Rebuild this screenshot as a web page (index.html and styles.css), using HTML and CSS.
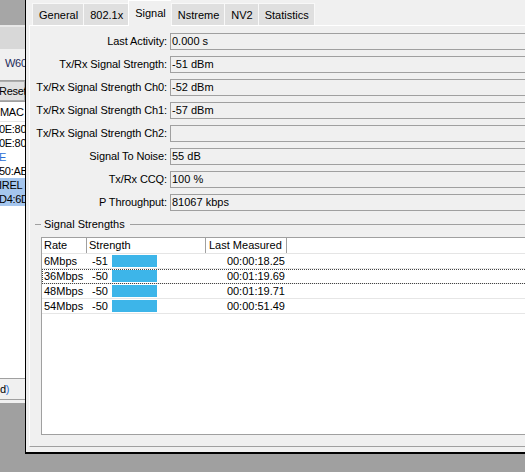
FILE: index.html
```html
<!DOCTYPE html>
<html lang="en">
<head>
    <meta charset="UTF-8">
    <meta name="viewport" content="width=device-width, initial-scale=1.0">
    <title>Registration - Signal</title>
    <link rel="stylesheet" href="styles.css">
</head>
<body>
    <div class="desktop">
        <!-- registration table window, mostly hidden behind the dialog -->
        <div class="bg-window">
            <div class="bg-title"></div>
            <div class="bg-toolbar"></div>
            <div class="bg-tabs">W60</div>
            <div class="bg-buttons"><span class="bg-button">Reset</span></div>
            <div class="bg-list">
                <div class="bg-list-head">MAC A</div>
                <div class="bg-row">0E:80</div>
                <div class="bg-row">0E:80</div>
                <div class="bg-row bg-link">E</div>
                <div class="bg-row">50:AB</div>
                <div class="bg-row selected">IREL</div>
                <div class="bg-row selected">D4:6D</div>
            </div>
            <div class="bg-status">d<span class="bg-link">)</span></div>
        </div>

        <div class="dialog">
            <div class="tabs">
                <span class="tab">General</span>
                <span class="tab">802.1x</span>
                <span class="tab active">Signal</span>
                <span class="tab">Nstreme</span>
                <span class="tab">NV2</span>
                <span class="tab">Statistics</span>
            </div>

            <div class="tab-page">
                <div class="fields">
                    <label>Last Activity:</label>
                    <div class="value">0.000 s</div>
                    <label>Tx/Rx Signal Strength:</label>
                    <div class="value">-51 dBm</div>
                    <label>Tx/Rx Signal Strength Ch0:</label>
                    <div class="value">-52 dBm</div>
                    <label>Tx/Rx Signal Strength Ch1:</label>
                    <div class="value">-57 dBm</div>
                    <label>Tx/Rx Signal Strength Ch2:</label>
                    <div class="value"></div>
                    <label>Signal To Noise:</label>
                    <div class="value">55 dB</div>
                    <label>Tx/Rx CCQ:</label>
                    <div class="value">100 %</div>
                    <label>P Throughput:</label>
                    <div class="value">81067 kbps</div>
                </div>

                <div class="group-title">Signal Strengths</div>

                <div class="list">
                    <div class="list-head">
                        <span>Rate</span>
                        <span>Strength</span>
                        <span>Last Measured</span>
                        <span class="filler"></span>
                    </div>
                    <div class="list-row">
                        <span>6Mbps</span>
                        <span class="strength"><span class="num">-51</span><span class="bar"></span></span>
                        <span class="time">00:00:18.25</span>
                        <span></span>
                    </div>
                    <div class="list-row focused">
                        <span>36Mbps</span>
                        <span class="strength"><span class="num">-50</span><span class="bar"></span></span>
                        <span class="time">00:01:19.69</span>
                        <span></span>
                    </div>
                    <div class="list-row">
                        <span>48Mbps</span>
                        <span class="strength"><span class="num">-50</span><span class="bar"></span></span>
                        <span class="time">00:01:19.71</span>
                        <span></span>
                    </div>
                    <div class="list-row">
                        <span>54Mbps</span>
                        <span class="strength"><span class="num">-50</span><span class="bar"></span></span>
                        <span class="time">00:00:51.49</span>
                        <span></span>
                    </div>
                </div>
            </div>
        </div>
    </div>
</body>
</html>
```

FILE: styles.css
```css
body {
    font-family: "Liberation Sans", Arial, sans-serif;
    font-size: 11px;
    color: #000;
    background-color: #a0a0a0;
    margin: 0;
    padding: 0;
    overflow: hidden;
}
.desktop {
    position: relative;
    height: 472px;
    overflow: hidden;
}

/* ---------- window behind ---------- */
.bg-window {
    position: absolute;
    left: 0;
    top: 0;
    width: 25px;
    height: 403px;
    overflow: hidden;
    white-space: nowrap;
    background-color: #f0f0f0;
    display: flex;
    flex-direction: column;
    padding-bottom: 3px;
    box-sizing: border-box;
    letter-spacing: -0.3px;
}
.bg-title {
    height: 25px;
    background-color: #a6a6a6;
}
.bg-toolbar {
    height: 22px;
    border-top: 2px solid #e8e8e8;
    background-color: #d8d8d8;
}
.bg-tabs {
    height: 31px;
    line-height: 28px;
    padding-left: 5px;
    color: #1c2a5a;
    border-bottom: 1px solid #a0a0a0;
}
.bg-buttons {
    height: 20px;
}
.bg-button {
    display: block;
    margin-left: -5px;
    padding: 0 4px 0 3px;
    line-height: 18px;
    background-color: #e1e1e1;
    border: 1px solid #adadad;
}
.bg-list {
    flex: 1;
    background-color: #fff;
    border-top: 1px solid #a0a0a0;
}
.bg-list-head {
    height: 19px;
    line-height: 21px;
    border-bottom: 1px solid #e5e5e5;
}
.bg-row {
    height: 14px;
    line-height: 14px;
    margin-left: -1px;
}
.bg-row.selected {
    background-color: #a5c6ee;
}
.bg-link {
    color: #2a6fd6;
}
.bg-status {
    height: 20px;
    line-height: 20px;
    border-top: 1px solid #a0a0a0;
    border-bottom: 1px solid #a0a0a0;
}

/* ---------- dialog ---------- */
.dialog {
    position: absolute;
    left: 25px;
    top: 0;
    width: 540px;
    height: 454px;
    box-sizing: border-box;
    background-color: #f0f0f0;
    border-left: 1px solid #000;
    border-bottom: 2px solid #000;
    padding: 0 0 5px 3px;
    display: flex;
    flex-direction: column;
}
.tabs {
    display: flex;
    align-items: flex-end;
    height: 25px;
    padding-left: 3px;
    white-space: nowrap;
}
.tab {
    height: 22px;
    line-height: 22px;
    padding: 0 5px 0 6px;
    box-sizing: border-box;
    background-color: #dfdfdf;
    border-top: 1px solid #f8f8f8;
    border-left: 1px solid #f8f8f8;
}
.tab:last-child {
    border-right: 1px solid #f8f8f8;
}
.tab.active {
    position: relative;
    z-index: 1;
    height: 26px;
    line-height: 24px;
    margin-bottom: -1px;
    background-color: #f0f0f0;
    border-top-color: #fff;
    border-left-color: #fff;
}
.tab-page {
    flex: 1;
    display: flex;
    flex-direction: column;
    border-top: 1px solid #fff;
    border-left: 1px solid #fff;
    border-bottom: 1px solid #a0a0a0;
    padding: 7px 0 11px 0;
}

.fields {
    display: grid;
    grid-template-columns: 137px 1fr;
    column-gap: 3px;
    row-gap: 6px;
}
.fields label {
    text-align: right;
    line-height: 17px;
    white-space: nowrap;
    letter-spacing: -0.1px;
}
.value {
    height: 17px;
    box-sizing: border-box;
    border: 1px solid #a0a0a0;
    border-right: none;
    padding-left: 1px;
    line-height: 15px;
}

.group-title {
    display: flex;
    align-items: center;
    gap: 3px;
    margin: 6px 0 6px 5px;
    line-height: 14px;
}
.group-title::before {
    content: "";
    width: 6px;
    height: 1px;
    background-color: #a0a0a0;
}
.group-title::after {
    content: "";
    flex: 1;
    height: 1px;
    margin-left: 2px;
    background-color: #a0a0a0;
}

/* ---------- signal list ---------- */
.list {
    flex: 1;
    margin-left: 11px;
    background-color: #fff;
    border-top: 1px solid #a0a0a0;
    border-left: 1px solid #a0a0a0;
    border-bottom: 1px solid #a0a0a0;
}
.list-head, .list-row {
    display: grid;
    grid-template-columns: 45px 119px 81px 1fr;
    white-space: nowrap;
}
.list-head {
    height: 16px;
    box-sizing: border-box;
    line-height: 15px;
    border-bottom: 1px solid #e5e5e5;
}
.list-head span {
    padding-left: 2px;
    border-right: 1px solid #a0a0a0;
}
.list-head span:nth-child(3) {
    padding-left: 3px;
}
.list-head .filler {
    border-right: none;
}
.list-row {
    height: 15px;
    box-sizing: border-box;
    line-height: 14px;
    border-bottom: 1px solid #e6e6e6;
}
.list-row > span:first-child {
    padding-left: 2px;
}
.list-row.focused {
    outline: 1px dotted #444;
    outline-offset: -1px;
}
.strength {
    display: flex;
    align-items: center;
    padding-left: 5px;
}
.num {
    width: 20px;
}
.bar {
    width: 45px;
    height: 12px;
    background-color: #3db5e9;
}
.time {
    text-align: right;
    padding-right: 2px;
}
```
